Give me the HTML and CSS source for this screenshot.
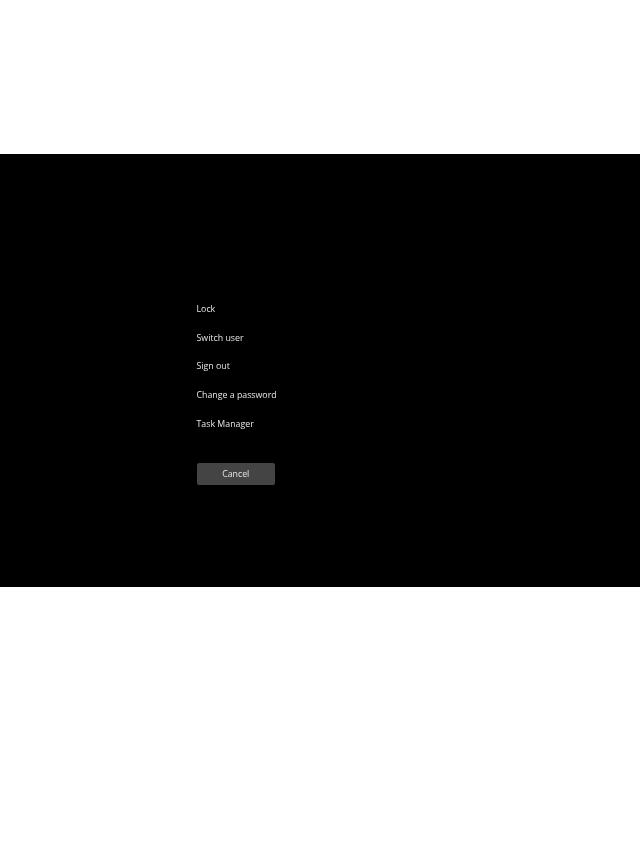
FILE: index.html
```html
<!DOCTYPE html>
<html lang="en">
<head>
    <meta charset="UTF-8">
    <meta name="viewport" content="width=device-width, initial-scale=1.0">
    <title>Security options</title>
    <link rel="stylesheet" href="styles.css">
</head>
<body>
    <main class="screen">
        <nav class="options">
            <a class="option">Lock</a>
            <a class="option">Switch user</a>
            <a class="option">Sign out</a>
            <a class="option">Change a password</a>
            <a class="option">Task Manager</a>
            <button class="cancel-button">Cancel</button>
        </nav>
    </main>
</body>
</html>
```

FILE: styles.css
```css
* {
    margin: 0;
    padding: 0;
    box-sizing: border-box;
}

body {
    background: white;
    font-family: "Open Sans", "Liberation Sans", sans-serif;
    padding-top: 154px;
    height: 853px;
    overflow: hidden;
}

.screen {
    background: #000;
    height: 433px;
    padding: 146px 0 0 196.5px;
}

.options {
    display: flex;
    flex-direction: column;
    align-items: flex-start;
    width: 80px;
    filter: blur(0.7px);
}

.option {
    color: #e6e6e6;
    font-size: 8.8px;
    line-height: 18px;
    margin-bottom: 10.7px;
    white-space: nowrap;
}

.cancel-button {
    width: 78.5px;
    height: 22px;
    margin-top: 20px;
    background: #444;
    border: none;
    border-radius: 2px;
    color: #e6e6e6;
    font-family: inherit;
    font-size: 8.8px;
}
```
